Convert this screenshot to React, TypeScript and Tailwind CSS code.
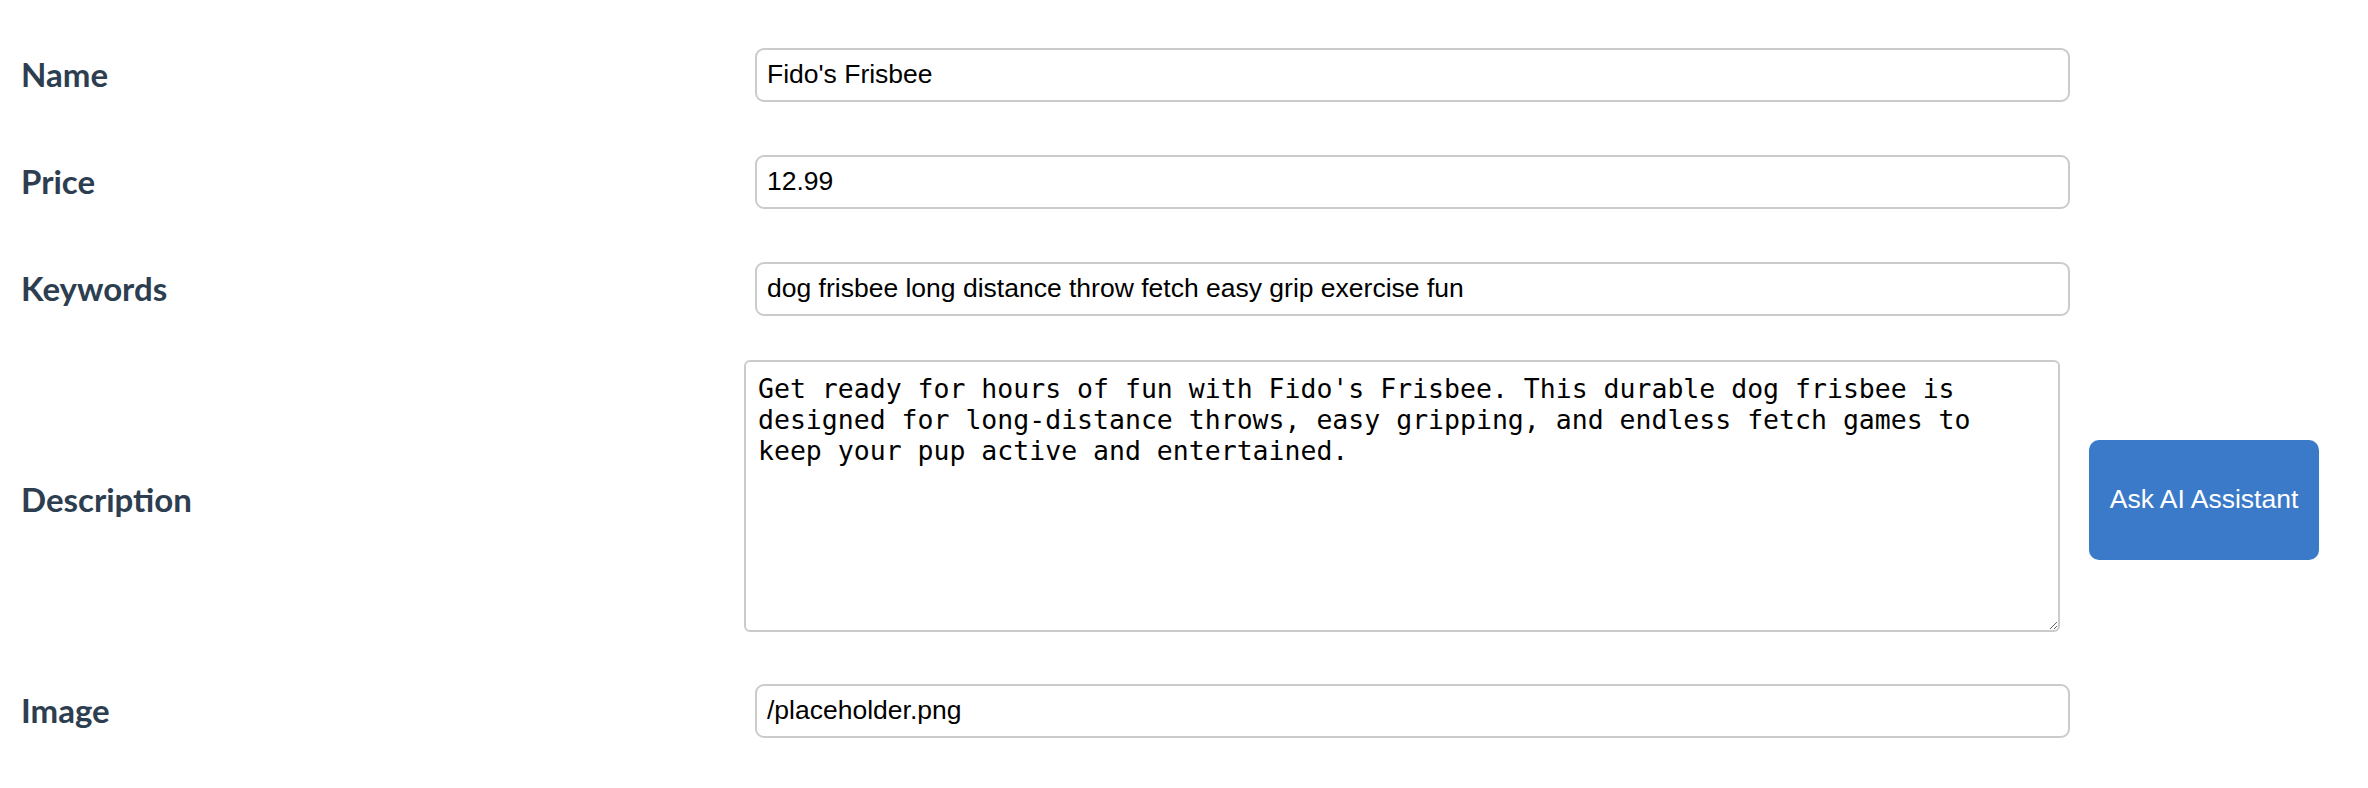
import React from 'react';

const labelClass =
  "font-['Lato',sans-serif] font-bold text-[33px] text-[#2c3e50] pl-[21px] shrink-0";
const inputClass =
  "w-[1315px] h-[54px] border-2 border-[#cbcbcb] rounded-[9px] px-[10px] text-[26.5px] text-black font-['Liberation_Sans',Arial,sans-serif] outline-none bg-white";

const fields = [
  { label: 'Name', value: "Fido's Frisbee" },
  { label: 'Price', value: '12.99' },
  { label: 'Keywords', value: 'dog frisbee long distance throw fetch easy grip exercise fun' },
];

const description =
  "Get ready for hours of fun with Fido's Frisbee. This durable dog frisbee is designed for long-distance throws, easy gripping, and endless fetch games to keep your pup active and entertained.";

const App: React.FC = () => {
  return (
    <div className="w-[2368px] h-[788px] bg-white pt-[21px] overflow-hidden">
      {fields.map((f) => (
        <div key={f.label} className="flex items-center h-[107px]">
          <label className={`${labelClass} w-[755px]`}>{f.label}</label>
          <input className={inputClass} defaultValue={f.value} />
        </div>
      ))}

      <div className="flex items-center h-[315px]">
        <label className={`${labelClass} w-[744px]`}>Description</label>
        <div className="pt-[18px] pb-[25px]">
          <textarea
            className="block w-[1316px] h-[272px] border-2 border-[#cbcbcb] rounded-[6px] pl-[12px] pr-[10px] pt-[11px] text-[26.5px] leading-[31px] text-black font-['DejaVu_Sans_Mono',monospace] outline-none bg-white"
            defaultValue={description}
          />
        </div>
        <button className="ml-[29px] w-[230px] h-[120px] bg-[#3b79c9] rounded-[10px] text-white text-[26.5px] font-['Liberation_Sans',Arial,sans-serif]">
          Ask AI Assistant
        </button>
      </div>

      <div className="flex items-center h-[107px]">
        <label className={`${labelClass} w-[755px]`}>Image</label>
        <input className={inputClass} defaultValue="/placeholder.png" />
      </div>
    </div>
  );
};

export default App;
